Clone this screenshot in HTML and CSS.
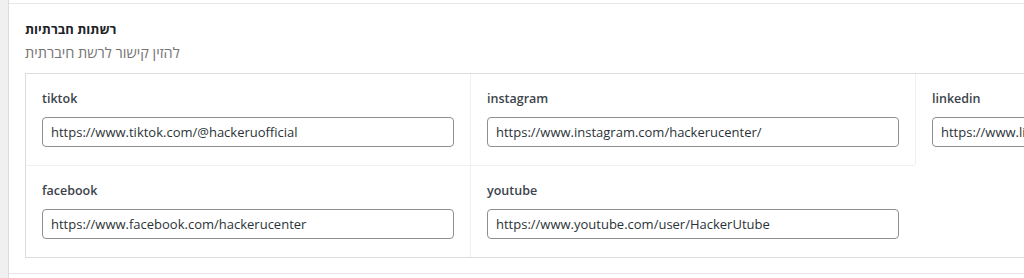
FILE: index.html
```html
<!DOCTYPE html>
<html lang="he">
<head>
  <meta charset="UTF-8" />
  <meta name="viewport" content="width=device-width, initial-scale=1.0"/>
  <title>רשתות חברתיות</title>
  <link rel="stylesheet" href="styles.css">
</head>
<body>

  <div class="panel">
    <div class="section">
      <h3 class="section-title">רשתות חברתיות</h3>
      <p class="section-desc">להזין קישור לרשת חיברתית</p>

      <div class="networks">
        <div class="field">
          <label for="tiktok">tiktok</label>
          <input id="tiktok" type="url" value="https://www.tiktok.com/@hackeruofficial">
        </div>
        <div class="field col-2">
          <label for="instagram">instagram</label>
          <input id="instagram" type="url" value="https://www.instagram.com/hackerucenter/">
        </div>
        <div class="field col-3">
          <label for="linkedin">linkedin</label>
          <input id="linkedin" type="url" value="https://www.linkedin.com/school/hackeru/">
        </div>
        <div class="field row-2">
          <label for="facebook">facebook</label>
          <input id="facebook" type="url" value="https://www.facebook.com/hackerucenter">
        </div>
        <div class="field col-2 row-2">
          <label for="youtube">youtube</label>
          <input id="youtube" type="url" value="https://www.youtube.com/user/HackerUtube">
        </div>
      </div>
    </div>
  </div>

</body>
</html>
```

FILE: styles.css
```css
body {
  margin: 0;
  padding: 0;
  background: #f0f0f1;
  font-family: "Open Sans", "Liberation Sans", sans-serif;
  color: #1d2327;
  overflow: hidden;
}

.panel {
  margin-left: 8px;
  height: 278px;
  padding-top: 3px;
  box-sizing: border-box;
  background: #fff;
  border-left: 1px solid #dcdcde;
  overflow: hidden;
}

.section {
  padding: 15px 0 15px 16px;
  border-top: 1px solid #e8e8e8;
  border-bottom: 1px solid #e8e8e8;
}

.section-title {
  margin: 0;
  font-size: 13px;
  line-height: 20px;
  font-weight: 700;
  color: #1d2327;
}

.section-desc {
  margin: 3px 0 0;
  font-size: 14.5px;
  line-height: 21px;
  color: #757575;
}

.networks {
  margin-top: 10px;
  display: grid;
  grid-template-columns: 444px 445px 445px;
  width: 1400px;
  border: 1px solid #dcdcde;
}

.field {
  padding: 16px 16px 18px;
}

.col-2,
.col-3 {
  border-left: 1px solid #f0f0f1;
}

.row-2 {
  border-top: 1px solid #f0f0f1;
}

.field label {
  display: block;
  font-size: 12.5px;
  line-height: 18px;
  font-weight: 600;
  color: #3c434a;
}

.field input {
  display: block;
  box-sizing: border-box;
  width: 100%;
  height: 30px;
  margin-top: 9px;
  padding: 0 8px;
  font-family: inherit;
  font-size: 13px;
  color: #2c3338;
  background: #fff;
  border: 1px solid #8c8f94;
  border-radius: 4px;
}
```
